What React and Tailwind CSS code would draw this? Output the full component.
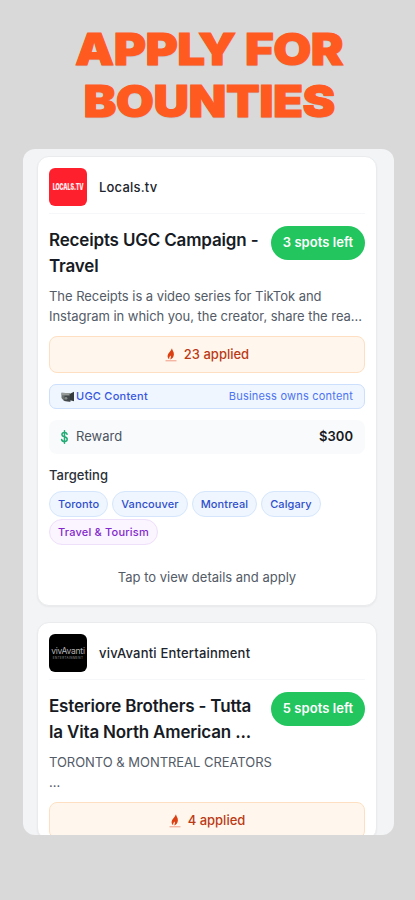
import React from 'react';
import clsx from 'clsx';

const bounties = [
    {
        id: 1,
        brand: 'Locals.tv',
        logo: 'locals',
        title: ['Receipts UGC Campaign -', 'Travel'],
        spots: 3,
        description: ['The Receipts is a video series for TikTok and', 'Instagram in which you, the creator, share the rea...'],
        applied: 23,
        reward: '$300',
        cities: ['Toronto', 'Vancouver', 'Montreal', 'Calgary'],
        topics: ['Travel & Tourism'],
    },
    {
        id: 2,
        brand: 'vivAvanti Entertainment',
        logo: 'vivavanti',
        title: ['Esteriore Brothers - Tutta', 'la Vita North American ...'],
        spots: 5,
        description: ['TORONTO & MONTREAL CREATORS', '...'],
        applied: 4,
    },
];

const FlameIcon = () => (
    <svg width="12" height="14" viewBox="0 0 12 14" className="shrink-0">
        <path d="M7 0.2C6.9 2 9.2 3.4 8.9 6.4C8.7 8.9 7.3 10.6 5.2 11.4C5.8 9.9 6.2 8.6 5.4 7.6C4.5 8.8 4 10 4.2 11.3C2.8 10.4 2.4 8.8 2.7 7.2C3 5.2 5.6 3.6 7 0.2Z" fill="#dc3f12" />
        <path d="M0.5 12.8H11.5" stroke="#ef9a84" strokeWidth="1" />
    </svg>
);

const CameraIcon = () => (
    <svg width="14" height="13" viewBox="0 0 14 13" className="shrink-0">
        <path d="M0.5 2.8L9 3.2V11.5L3 11L0.5 8Z" fill="#6b716f" />
        <path d="M3.5 5.5H9.5V11.8L3.5 11Z" fill="#41474a" />
        <path d="M9 3.8L13 1.8V11.3L9 10.2Z" fill="#353b3d" />
        <path d="M0.5 2.8L8 3.2V5.2H0.5Z" fill="#969b99" />
        <circle cx="5" cy="8.3" r="1.4" fill="#858b88" />
    </svg>
);

const DollarIcon = () => (
    <svg width="9" height="14" viewBox="0 0 9 14" fill="none" stroke="#22ab75" strokeWidth="1.5" strokeLinecap="round" className="shrink-0">
        <path d="M4.5 0.8V13.2M7.1 4.3C6.8 3.1 5.8 2.5 4.5 2.5C3 2.5 1.9 3.3 1.9 4.7C1.9 7.5 7.2 6.1 7.2 9.2C7.2 10.6 6 11.5 4.5 11.5C3 11.5 1.9 10.8 1.6 9.5" />
    </svg>
);

const Logo = ({ name }) => {
    if (name === 'locals') {
        return (
            <div className="flex size-[38px] shrink-0 items-center justify-center rounded-[6px] bg-[#ff202e]">
                <span className="scale-x-[0.64] text-[8.5px] font-black tracking-[-0.2px] text-white/90">LOCALS.TV</span>
            </div>
        );
    }
    return (
        <div className="flex size-[38px] shrink-0 flex-col items-center justify-center rounded-[6px] bg-black">
            <span className="text-[8.5px] leading-[9px] tracking-[-0.25px] text-[#b5b5b5]">vivAvanti</span>
            <span className="text-[3px] leading-[4px] tracking-[0.4px] whitespace-nowrap text-[#999999]">ENTERTAINMENT</span>
        </div>
    );
};

const Chip = ({ label, purple }) => (
    <span
        className={clsx(
            'flex h-[26px] items-center rounded-full border px-[8px] text-[11px] font-medium',
            purple ? 'border-[#eedffb] bg-[#faf5ff] tracking-[0.2px] text-[#8429cc]' : 'border-[#d5e6fc] bg-[#eff6ff] tracking-[0.1px] text-[#304fcc]'
        )}
    >
        {label}
    </span>
);

const BountyDetails = ({ bounty }) => (
    <>
        <div className="mt-[11px] flex h-[25px] items-center justify-between rounded-[7px] border border-[#ccdffc] bg-[#eff6ff] px-[11px] text-[11px]">
            <span className="flex items-center gap-[1px] font-medium tracking-[0.25px] text-[#3857df]">
                <CameraIcon />
                UGC Content
            </span>
            <span className="tracking-[0.2px] text-[#4c73f0]">Business owns content</span>
        </div>

        <div className="mt-[11px] flex h-[34px] items-center rounded-[8px] bg-[#f9fafb] pr-[12px] pl-[11px] text-[13px]">
            <DollarIcon />
            <span className="ml-[7px] text-[#4b535f]">Reward</span>
            <span className="ml-auto font-semibold text-[#16191f]">{bounty.reward}</span>
        </div>

        <h3 className="mt-[11px] text-[13px] leading-[20px] font-medium text-[#2a2f38]">Targeting</h3>
        <div className="mt-[6px] flex flex-wrap gap-x-[4px] gap-y-[2px]">
            {bounty.cities.map((city) => <Chip key={city} label={city} />)}
            {bounty.topics.map((topic) => <Chip key={topic} label={topic} purple />)}
        </div>

        <p className="mt-[22px] pb-[18px] text-center text-[13px] leading-[20px] text-[#535b67]">Tap to view details and apply</p>
    </>
);

const BountyCard = ({ bounty }) => (
    <div className="rounded-[12px] border border-[#e9ebed] bg-white px-[11px] pt-[11px] shadow-xs">
        <div className="flex h-[46px] items-start border-b border-[#f6f7f8]">
            <Logo name={bounty.logo} />
            <span className="ml-[12px] text-[13px] leading-[38px] font-medium tracking-[0.2px] text-[#20242c]">{bounty.brand}</span>
        </div>

        <div className="mt-[12px] flex items-start justify-between">
            <h2 className="pt-[1px] text-[17px] leading-[26px] font-semibold tracking-[-0.17px] whitespace-nowrap text-[#171b24]">
                {bounty.title[0]}<br />{bounty.title[1]}
            </h2>
            <span className="flex h-[34px] w-[94px] shrink-0 items-center justify-center rounded-full bg-[#22c55e] text-[13px] font-semibold tracking-[0.05px] whitespace-nowrap text-white">
                {bounty.spots} spots left
            </span>
        </div>

        <p className="mt-[8px] text-[13px] leading-[19.5px] tracking-[-0.04px] whitespace-nowrap text-[#535b67]">
            {bounty.description[0]}<br />{bounty.description[1]}
        </p>

        <div className="mt-[10px] flex h-[37px] items-center justify-center gap-[7px] rounded-[8px] border border-[#fedfc1] bg-[#fff7ed] text-[13px] font-medium text-[#bb3a16]">
            <FlameIcon />
            <span>{bounty.applied} applied</span>
        </div>

        {bounty.reward && <BountyDetails bounty={bounty} />}
    </div>
);

const App = () => {
    return (
        <div className="h-[900px] w-[415px] overflow-hidden bg-[#d9d9d9] font-['Inter',sans-serif]">
            <h1 className="origin-center scale-x-[1.12] pt-[24px] pb-[1px] pl-[3px] text-center text-[44px] leading-[51.5px] font-black tracking-[-0.5px] whitespace-nowrap text-[#ff5a1f] [-webkit-text-stroke:1px_#ff5a1f] [text-shadow:0_1px_1px_rgba(0,0,0,0.15)]">
                APPLY FOR<br />BOUNTIES
            </h1>
            <main className="mt-[21px] ml-[23px] flex h-[686px] w-[371px] flex-col gap-[16px] overflow-hidden rounded-[12px] bg-[#f3f4f6] pt-[7px] pr-[17px] pl-[14px]">
                {bounties.map((bounty) => <BountyCard key={bounty.id} bounty={bounty} />)}
            </main>
        </div>
    );
};

export default App;
